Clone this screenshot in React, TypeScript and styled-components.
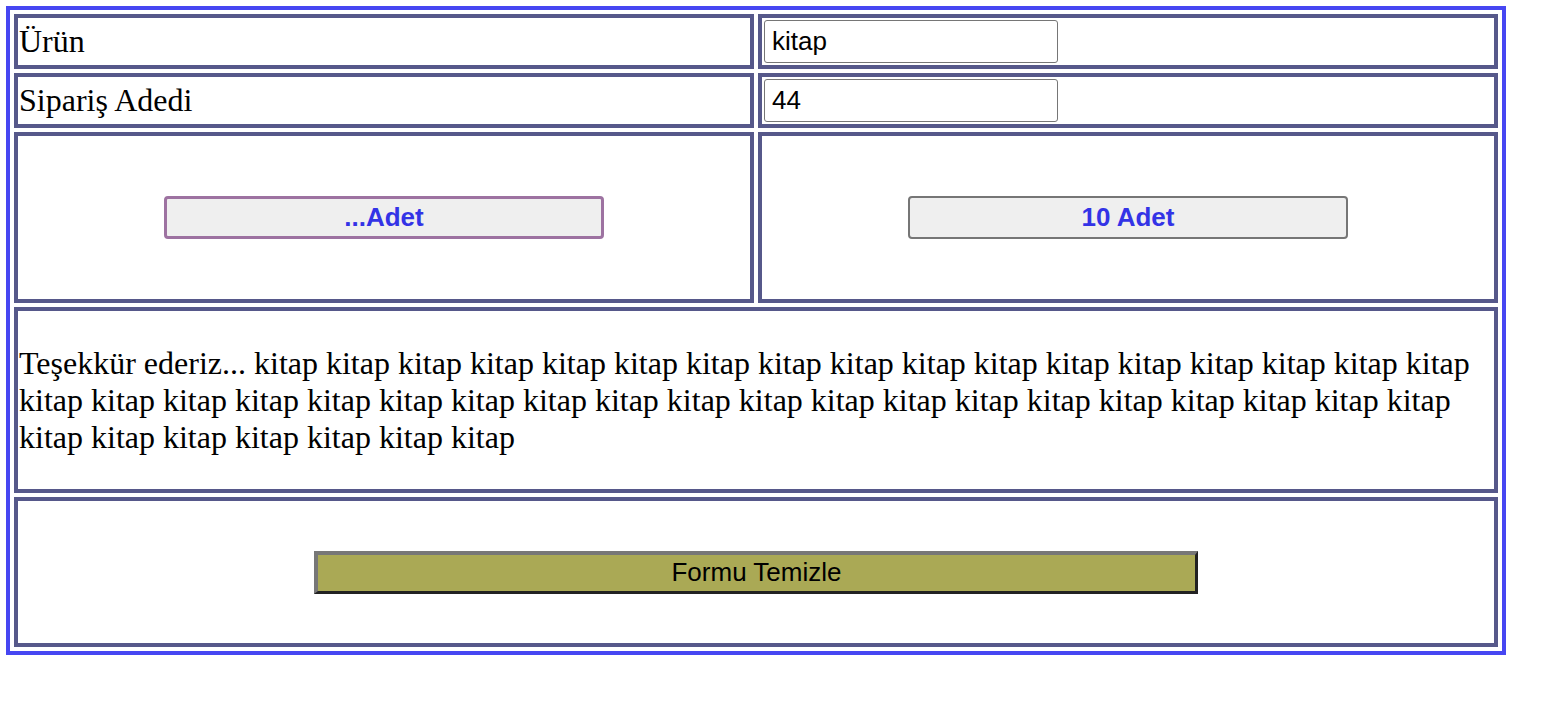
import styled, { createGlobalStyle } from 'styled-components'

const GlobalStyle = createGlobalStyle`
  body {
    margin: 6px;
    background: #fff;
    font-family: "Liberation Serif", "Times New Roman", serif;
  }
`

const OrderTable = styled.table`
  width: 1500px;
  border: 4px solid #4646f2;
  border-collapse: separate;
  border-spacing: 4px;
  box-sizing: border-box;
`

const Cell = styled.td<{ $h: number; $center?: boolean }>`
  box-sizing: border-box;
  height: ${(p) => p.$h}px;
  border: 4px solid #56588a;
  padding: 1px;
  font-size: 32px;
  line-height: 37px;
  color: #000;
  vertical-align: middle;
  text-align: ${(p) => (p.$center ? 'center' : 'left')};
`

const TextInput = styled.input`
  box-sizing: border-box;
  width: 294px;
  height: 43px;
  margin: 0 0 0 1px;
  padding: 0 7px;
  border: 1px solid #767676;
  border-radius: 3px;
  font-family: "Liberation Sans", Arial, sans-serif;
  font-size: 26px;
  color: #000;
  vertical-align: middle;
`

const CountButton = styled.button<{ $active?: boolean }>`
  box-sizing: border-box;
  width: 440px;
  height: 43px;
  margin: 0;
  background: #efefef;
  border: ${(p) => (p.$active ? '3px solid #9d72a1' : '2px solid #767676')};
  border-radius: 4px;
  font-family: "Liberation Sans", Arial, sans-serif;
  font-size: 26px;
  font-weight: bold;
  color: #3333e6;
  vertical-align: middle;
`

const ResetButton = styled.button`
  box-sizing: border-box;
  width: 884px;
  height: 43px;
  margin: 0;
  background: #aaa955;
  border-width: 4px 3px 3px 4px;
  border-style: solid;
  border-color: #777 #222 #222 #777;
  font-family: "Liberation Sans", Arial, sans-serif;
  font-size: 26px;
  color: #000;
  vertical-align: middle;
`

const Thanks = styled.p`
  margin: 0;
`

const count = 44
const words = Array.from({ length: count }, () => 'kitap').join(' ')

export default function App() {
  return (
    <>
      <GlobalStyle />
      <OrderTable>
        <tbody>
          <tr>
            <Cell $h={55}>Ürün</Cell>
            <Cell $h={55}>
              <TextInput defaultValue="kitap" />
            </Cell>
          </tr>
          <tr>
            <Cell $h={55}>Sipariş Adedi</Cell>
            <Cell $h={55}>
              <TextInput defaultValue={String(count)} />
            </Cell>
          </tr>
          <tr>
            <Cell $h={171} $center>
              <CountButton $active>...Adet</CountButton>
            </Cell>
            <Cell $h={171} $center>
              <CountButton>10 Adet</CountButton>
            </Cell>
          </tr>
          <tr>
            <Cell $h={186} colSpan={2}>
              <Thanks>Teşekkür ederiz... {words}</Thanks>
            </Cell>
          </tr>
          <tr>
            <Cell $h={150} colSpan={2} $center>
              <ResetButton type="reset">Formu Temizle</ResetButton>
            </Cell>
          </tr>
        </tbody>
      </OrderTable>
    </>
  )
}
